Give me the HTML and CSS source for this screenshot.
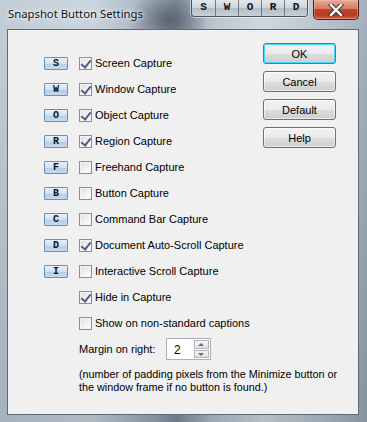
FILE: index.html
```html
<!DOCTYPE html>
<html lang="en">
<head>
    <meta charset="UTF-8">
    <title>Snapshot Button Settings</title>
    <link rel="stylesheet" href="styles.css">
</head>
<body>
    <div class="window">
        <div class="titlebar">
            <span class="title">Snapshot Button Settings</span>
            <div class="sword">
                <span>S</span><span>W</span><span>O</span><span>R</span><span>D</span>
            </div>
            <div class="close-btn">
                <svg width="16" height="12" viewBox="0 0 16 12">
                    <path d="M3 1 L13 11 M13 1 L3 11" stroke="#3a3a3a" stroke-width="4.4" stroke-linecap="square"/>
                    <path d="M3 1 L13 11 M13 1 L3 11" stroke="#ffffff" stroke-width="2.4" stroke-linecap="square"/>
                </svg>
            </div>
        </div>

        <div class="client">
            <div class="options">
                <div class="row"><span class="key">S</span><span class="check on"></span><span class="label">Screen Capture</span></div>
                <div class="row"><span class="key">W</span><span class="check on"></span><span class="label">Window Capture</span></div>
                <div class="row"><span class="key">O</span><span class="check on"></span><span class="label">Object Capture</span></div>
                <div class="row"><span class="key">R</span><span class="check on"></span><span class="label">Region Capture</span></div>
                <div class="row"><span class="key">F</span><span class="check"></span><span class="label">Freehand Capture</span></div>
                <div class="row"><span class="key">B</span><span class="check"></span><span class="label">Button Capture</span></div>
                <div class="row"><span class="key">C</span><span class="check"></span><span class="label">Command Bar Capture</span></div>
                <div class="row"><span class="key">D</span><span class="check on"></span><span class="label">Document Auto-Scroll Capture</span></div>
                <div class="row"><span class="key">I</span><span class="check"></span><span class="label">Interactive Scroll Capture</span></div>

                <div class="extra">
                    <div class="row"><span class="check on"></span><span class="label">Hide in Capture</span></div>
                    <div class="row"><span class="check"></span><span class="label">Show on non-standard captions</span></div>
                    <div class="margin-row">
                        <span class="label">Margin on right:</span>
                        <div class="spin">
                            <span class="spin-value">2</span>
                            <div class="spin-btns">
                                <span class="spin-btn up"></span>
                                <span class="spin-btn down"></span>
                            </div>
                        </div>
                    </div>
                    <p class="note">(number of padding pixels from the Minimize button or<br>the window frame if no button is found.)</p>
                </div>
            </div>

            <div class="actions">
                <button class="btn default-btn">OK</button>
                <button class="btn">Cancel</button>
                <button class="btn">Default</button>
                <button class="btn">Help</button>
            </div>
        </div>
    </div>
</body>
</html>
```

FILE: styles.css
```css
:root {
    --dlg-bg: #f0f0f0;
    --text: #000000;
    --frame-edge: #5d6b78;
    --check-border: #8e8f8f;
    --check-mark: #4a5f8f;
}

html, body {
    margin: 0;
    padding: 0;
}

body {
    width: 367px;
    height: 422px;
    overflow: hidden;
    font-family: 'Liberation Sans', Arial, sans-serif;
    font-size: 11px;
    color: var(--text);
}

.window {
    width: 367px;
    height: 422px;
    box-sizing: border-box;
    padding: 0 8px 7px 7px;
    display: flex;
    flex-direction: column;
    background:
        radial-gradient(ellipse 40px 30px at 168px 20px, rgba(40, 50, 60, 0.55), transparent),
        radial-gradient(ellipse 70px 40px at 240px 60px, rgba(230, 236, 242, 0.5), transparent),
        linear-gradient(180deg, rgba(255, 255, 255, 0.15), rgba(0, 0, 0, 0.1)),
        linear-gradient(90deg, #b7c5d1 0%, #c3cfd9 25%, #93a3b1 42%, #788896 48%, #aebcc8 58%, #c9d3dc 72%, #aebbc6 88%, #95a4b1 100%);
}

/* title bar */
.titlebar {
    height: 29px;
    flex-shrink: 0;
    display: flex;
    align-items: flex-start;
}

.title {
    font-family: 'Noto Sans', sans-serif;
    font-size: 11.3px;
    color: #111;
    margin: 6px 0 0 1px;
    text-shadow: 0 0 6px rgba(255, 255, 255, 0.9), 0 0 3px rgba(255, 255, 255, 0.9);
    flex: 1;
}

.sword {
    display: flex;
    height: 16px;
    margin-right: 5px;
    border: 1px solid #4a5560;
    border-top: none;
    border-radius: 0 0 4px 4px;
    overflow: hidden;
    box-shadow: 0 0 0 1px rgba(255, 255, 255, 0.5);
}

.sword span {
    width: 23px;
    height: 16px;
    box-sizing: border-box;
    border-left: 1px solid #6f7a85;
    background: linear-gradient(180deg, #e4e8ec 0%, #ccd3d9 50%, #b3bcc5 51%, #c8d0d7 100%);
    font-family: 'Liberation Mono', monospace;
    font-weight: bold;
    font-size: 11px;
    text-align: center;
    line-height: 15px;
    color: #111;
}

.sword span:first-child {
    border-left: none;
}

.close-btn {
    width: 46px;
    height: 20px;
    box-sizing: border-box;
    border: 1px solid #4a2018;
    border-top: none;
    border-radius: 0 0 5px 5px;
    background: linear-gradient(180deg, #e9a897 0%, #d97c65 45%, #c2432b 50%, #b53a22 80%, #d0694d 100%);
    box-shadow: inset 0 0 0 1px rgba(255, 200, 180, 0.4);
    display: flex;
    align-items: center;
    justify-content: center;
}

/* dialog body */
.client {
    flex: 1;
    background: var(--dlg-bg);
    border: 1px solid var(--frame-edge);
    display: flex;
    padding: 20px 0 0 36px;
}

.options {
    flex: 0 0 219px;
    min-width: 0;
}

.row {
    height: 26px;
    display: flex;
    align-items: center;
}

.key {
    width: 24px;
    height: 13px;
    box-sizing: border-box;
    border: 1px solid #6d8fb3;
    border-radius: 1px;
    background: linear-gradient(180deg, #e8f1fb 0%, #cfe0f2 50%, #b6cde6 51%, #c6d9ee 100%);
    font-family: 'Liberation Mono', monospace;
    font-weight: bold;
    font-size: 10px;
    line-height: 11px;
    text-align: center;
    color: #111;
    margin-right: 11px;
}

.check {
    width: 13px;
    height: 13px;
    box-sizing: border-box;
    border: 1px solid var(--check-border);
    background: linear-gradient(135deg, #dcdcdc 0%, #f4f4f4 60%, #ffffff 100%);
    box-shadow: inset 0 0 0 1px #f4f4f4;
    margin-right: 3px;
    position: relative;
    flex-shrink: 0;
}

.check.on::after {
    content: '';
    position: absolute;
    left: 3px;
    top: 0px;
    width: 4px;
    height: 8px;
    border: solid var(--check-mark);
    border-width: 0 2px 2px 0;
    transform: rotate(38deg);
}

.label {
    white-space: nowrap;
}

.extra {
    margin-left: 35px;
}

.margin-row {
    display: flex;
    align-items: center;
    margin-top: 1px;
    height: 24px;
}

.margin-row .label {
    width: 87px;
}

.spin {
    width: 45px;
    height: 22px;
    box-sizing: border-box;
    border: 1px solid #abadb3;
    background: #fff;
    display: flex;
    justify-content: space-between;
}

.spin-value {
    padding: 4px 0 0 7px;
    font-size: 12px;
}

.spin-btns {
    display: flex;
    flex-direction: column;
    gap: 1px;
    padding: 1px;
}

.spin-btn {
    width: 15px;
    height: 9px;
    box-sizing: border-box;
    border: 1px solid #b5b5b5;
    background: linear-gradient(180deg, #f6f6f6, #e2e2e2);
    position: relative;
}

.spin-btn::after {
    content: '';
    position: absolute;
    left: 3px;
    width: 0;
    height: 0;
    border-left: 3.5px solid transparent;
    border-right: 3.5px solid transparent;
}

.spin-btn.up::after {
    top: 2px;
    border-bottom: 3px solid #4e6fb0;
}

.spin-btn.down::after {
    top: 2px;
    border-top: 3px solid #4e6fb0;
}

.note {
    margin: 7px 0 0 0;
    line-height: 13px;
    white-space: nowrap;
    font-size: 10.8px;
}

/* right hand buttons */
.actions {
    width: 73px;
    display: flex;
    flex-direction: column;
    gap: 7px;
    margin-top: -7px;
}

.btn {
    width: 73px;
    height: 21px;
    border: 1px solid #707070;
    border-radius: 3px;
    background: linear-gradient(180deg, #f2f2f2 0%, #ebebeb 50%, #dddddd 51%, #cfcfcf 100%);
    font-family: 'Liberation Sans', Arial, sans-serif;
    font-size: 11px;
    color: #000;
    padding: 0;
    box-shadow: inset 0 0 0 1px rgba(255, 255, 255, 0.6);
}

.default-btn {
    border-color: #3c7fb1;
    box-shadow: inset 0 0 0 1px #48d8fb;
}
```
